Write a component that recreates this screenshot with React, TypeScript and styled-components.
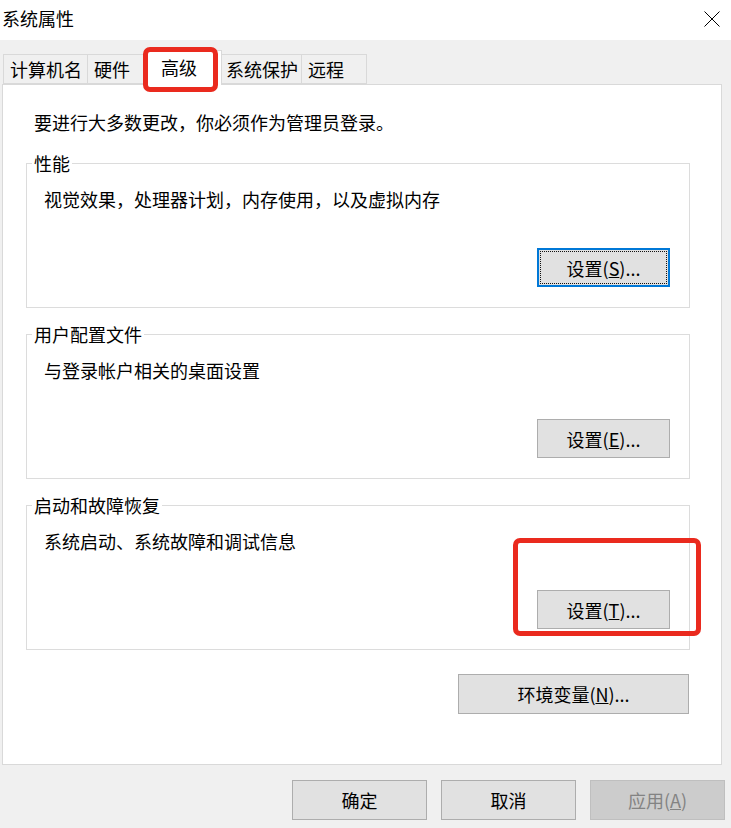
import styled, { createGlobalStyle } from "styled-components";

const GlobalStyle = createGlobalStyle`
html, body {
  margin: 0;
  padding: 0;
  background: #f0f0f0;
}
body {
  font-family: "Noto Sans CJK SC", "Liberation Sans", sans-serif;
}
`

const Window = styled.div`
width: 731px;
height: 828px;
background: #f0f0f0;
color: #000;
font-size: 18px;
position: relative;
overflow: hidden;
`
const TitleBar = styled.div`
height: 40px;
background: #fff;
display: flex;
align-items: center;
justify-content: space-between;
padding: 0 11px 0 2px;
box-sizing: border-box;
`
const Title = styled.span`
font-size: 18px;
line-height: 24px;
margin-top: -4px;
`
const CloseButton = styled.div`
width: 16px;
height: 16px;
margin-top: -2px;
display: flex;
`
const TabStrip = styled.div`
display: flex;
align-items: flex-end;
height: 34px;
margin-top: 10px;
padding-left: 3px;
position: relative;
z-index: 2;
`
const Tab = styled.div<{ $width: number; $active?: boolean }>`
width: ${p => p.$width}px;
height: ${p => (p.$active ? 35 : 30)}px;
box-sizing: border-box;
border: 1px solid #d9d9d9;
border-bottom: ${p => (p.$active ? "none" : "1px solid #d9d9d9")};
background: ${p => (p.$active ? "#fff" : "#f0f0f0")};
margin-left: ${p => (p.$active ? -2 : -1)}px;
margin-right: ${p => (p.$active ? -2 : 0)}px;
margin-bottom: ${p => (p.$active ? -1 : 0)}px;
padding-left: ${p => (p.$active ? 16 : 6)}px;
padding-bottom: ${p => (p.$active ? 3 : 0)}px;
display: flex;
align-items: center;
line-height: 24px;
position: relative;
z-index: ${p => (p.$active ? 2 : 1)};
&:first-child {
  margin-left: 0;
}
`
const Panel = styled.div`
margin-left: 2px;
width: 720px;
height: 681px;
box-sizing: border-box;
border: 1px solid #d9d9d9;
background: #fff;
padding: 25px 0 0 23px;
position: relative;
z-index: 1;
`
const Intro = styled.div`
margin-left: 8px;
line-height: 24px;
`
const Group = styled.fieldset<{ $gap: number }>`
width: 664px;
box-sizing: border-box;
margin: ${p => p.$gap}px 0 0 0;
padding: 0 19px 20px 0;
border: 1px solid #dcdcdc;
display: flex;
flex-direction: column;
`
const Legend = styled.legend`
margin-left: 5px;
padding: 0 2px;
line-height: 24px;
`
const Description = styled.div`
margin: 12px 0 0 17px;
line-height: 24px;
`
const ButtonRow = styled.div<{ $top: number }>`
display: flex;
justify-content: flex-end;
margin-top: ${p => p.$top}px;
`
const Button = styled.button<{ $width: number; $height: number; $default?: boolean }>`
width: ${p => p.$width}px;
height: ${p => p.$height}px;
box-sizing: border-box;
font-family: inherit;
font-size: 18px;
line-height: 24px;
color: #000;
background: #e1e1e1;
border: ${p => (p.$default ? "2px solid #0078d7" : "1px solid #adadad")};
outline: ${p => (p.$default ? "1px dotted #111" : "none")};
outline-offset: -4px;
padding: 0;
&:disabled {
  background: #cccccc;
  border-color: #bfbfbf;
  color: #838383;
}
`
const EnvRow = styled.div`
width: 663px;
display: flex;
justify-content: flex-end;
margin-top: 24px;
`
const Footer = styled.div`
display: flex;
justify-content: flex-end;
gap: 14px;
margin-top: 15px;
padding-right: 6px;
`
const Highlight = styled.div<{ $x: number; $y: number; $w: number; $h: number }>`
position: absolute;
left: ${p => p.$x}px;
top: ${p => p.$y}px;
width: ${p => p.$w}px;
height: ${p => p.$h}px;
box-sizing: border-box;
border: 5px solid #ea2a1e;
border-radius: 7px;
z-index: 5;
pointer-events: none;
`

const groups = [
    { title: "性能", text: "视觉效果，处理器计划，内存使用，以及虚拟内存", key: "S", gap: 17, focused: true },
    { title: "用户配置文件", text: "与登录帐户相关的桌面设置", key: "E", gap: 14 },
    { title: "启动和故障恢复", text: "系统启动、系统故障和调试信息", key: "T", gap: 14 },
];

const App = () => {
    return (
        <Window>
            <GlobalStyle />
            <TitleBar>
                <Title>系统属性</Title>
                <CloseButton>
                    <svg width="16" height="16" viewBox="0 0 16 16">
                        <path d="M0.5 0.5 L15.5 15.5 M15.5 0.5 L0.5 15.5" stroke="#000" strokeWidth="1" fill="none" />
                    </svg>
                </CloseButton>
            </TitleBar>
            <TabStrip>
                <Tab $width={85}>计算机名</Tab>
                <Tab $width={59}>硬件</Tab>
                <Tab $width={78} $active>高级</Tab>
                <Tab $width={83}>系统保护</Tab>
                <Tab $width={66}>远程</Tab>
            </TabStrip>
            <Panel>
                <Intro>要进行大多数更改，你必须作为管理员登录。</Intro>
                {groups.map(g => (
                    <Group key={g.key} $gap={g.gap}>
                        <Legend>{g.title}</Legend>
                        <Description>{g.text}</Description>
                        <ButtonRow $top={37}>
                            <Button $width={133} $height={39} $default={g.focused}>
                                设置(<u>{g.key}</u>)...
                            </Button>
                        </ButtonRow>
                    </Group>
                ))}
                <EnvRow>
                    <Button $width={231} $height={40}>
                        环境变量(<u>N</u>)...
                    </Button>
                </EnvRow>
            </Panel>
            <Footer>
                <Button $width={135} $height={40}>确定</Button>
                <Button $width={135} $height={40}>取消</Button>
                <Button $width={135} $height={40} disabled>应用(<u>A</u>)</Button>
            </Footer>
            <Highlight $x={143} $y={47} $w={75} $h={45} />
            <Highlight $x={513} $y={538} $w={188} $h={98} />
        </Window>
    )
}
export default App
